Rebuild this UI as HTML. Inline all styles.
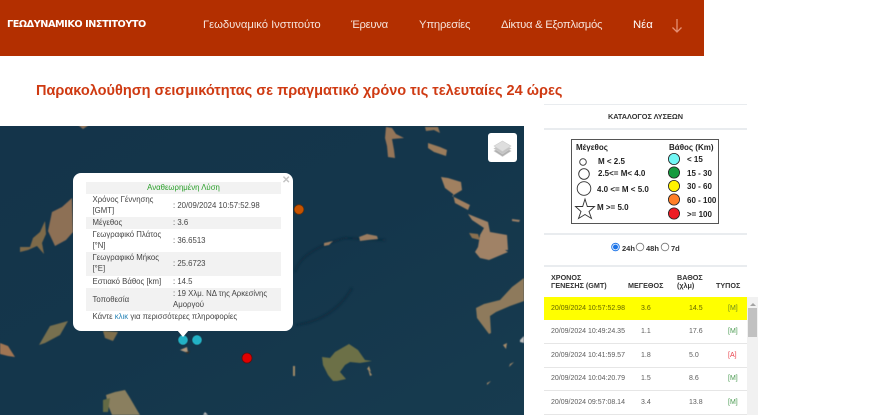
<!DOCTYPE html>
<html><head><meta charset="utf-8">
<style>
html,body{margin:0;padding:0;width:880px;height:415px;overflow:hidden;background:#fff;font-family:"Liberation Sans",sans-serif}
.a{position:absolute;white-space:nowrap}
#nav{position:absolute;left:0;top:0;width:704px;height:56px;background:#b32f00}
.n{position:absolute;top:18px;font:11.3px/14px "Liberation Sans",sans-serif;color:#f6e3da;white-space:nowrap}
#t{left:36px;top:83px;font:bold 14.53px/17px "Liberation Sans",sans-serif;color:#cf3a12}
.hr{position:absolute;left:544px;width:203px;background:#e9ecef}
.lg{position:absolute;font:bold 8px/11px "Liberation Sans",sans-serif;color:#222;white-space:nowrap}
.h{position:absolute;font:bold 7.2px/8px "Liberation Sans",sans-serif;color:#333;white-space:nowrap}
.r{position:absolute;left:544px;width:203px;height:23px;border-bottom:1px solid #e6e6e6}
.r span{position:absolute;top:6px;font:7px/11px "Liberation Sans",sans-serif;color:#5c5c5c;white-space:nowrap}
.p{position:absolute;left:86px;width:195px;font:7.8px/11px "Liberation Sans",sans-serif;color:#444}
.g{background:#f2f2f2}
.p b{font-weight:normal;position:absolute;left:6.5px}
.p i{font-style:normal;position:absolute;left:87px}
</style></head><body>
<div id="nav"></div>
<div class="a" style="left:7px;top:18px;font:bold 9.7px/14px 'DejaVu Sans',sans-serif;color:#fff;letter-spacing:-.45px">ΓΕΩΔΥΝΑΜΙΚΟ ΙΝΣΤΙΤΟΥΤΟ</div>
<div class="n" style="left:203px;letter-spacing:-.05px">Γεωδυναμικό Ινστιτούτο</div>
<div class="n" style="left:351px;letter-spacing:-.3px">Έρευνα</div>
<div class="n" style="left:419px;letter-spacing:-.2px">Υπηρεσίες</div>
<div class="n" style="left:501px;letter-spacing:-.27px">Δίκτυα &amp; Εξοπλισμός</div>
<div class="n" style="left:633px;color:#fff">Νέα</div>
<svg class="a" style="left:670px;top:18px" width="14" height="16" viewBox="0 0 14 16"><path d="M7 1V14M2.5 9.5L7 14L11.5 9.5" fill="none" stroke="#e58f72" stroke-width="1.3"/></svg>
<div id="t" class="a">Παρακολούθηση σεισμικότητας σε πραγματικό χρόνο τις τελευταίες 24 ώρες</div>

<svg class="a" style="left:0;top:126px" width="524" height="289" viewBox="0 126 524 289">
<defs>
<filter id="s"><feGaussianBlur stdDeviation=".5"/></filter>
<filter id="c" x="-10%" y="-50%" width="120%" height="200%"><feGaussianBlur stdDeviation="1"/></filter>
<linearGradient id="bg" x1="0" y1="0" x2="1" y2="1"><stop offset="0" stop-color="#14344a"/><stop offset=".5" stop-color="#14364b"/><stop offset="1" stop-color="#173b4f"/></linearGradient>
</defs>
<rect x="0" y="126" width="524" height="289" fill="url(#bg)"/>
<path d="M296 325C330 320 345 300 352 288M295 272C300 255 320 245 345 238L385 240" fill="none" stroke="#0e2b3e" stroke-width="1.8" filter="url(#c)"/>
<g filter="url(#s)">
<g fill="#8d6f55">
<path d="M48 231L52 212L62 207L72 198L73 232L66 240L55 246Z"/>
<path d="M30 247L33 238L40 232L45 221L46 234L42 243L44 254L37 246L28 250L20 252L20 247Z" fill="#7e6a4a"/>
<path d="M0 343L8 346L15 357L8 356L0 354Z" fill="#a07552"/>
<path d="M39 345L50 326L68 321L60 335L45 343Z" fill="#77704f"/>
<path d="M103 331L118 332L113 341L105 338Z" fill="#80704e"/>
<path d="M180 350L187 347L188 353Z" fill="#b09a80"/>
<path d="M185 352L190 351L188 354Z" fill="#3a3028"/>
<path d="M78 125L89 125L83 129Z" fill="#8a7058"/>
<path d="M386 127L392 128L396 134L404 138L392 139L394 150L395 158L388 157L387 146L385 138Z" fill="#947558"/>
<path d="M428 143L440 147L447 150L446 156L434 152L428 148Z" fill="#9a7c5c"/>
<path d="M425 127L438 127L440 133L434 130L426 131Z" fill="#8f7558"/>
<path d="M441 177L448 178L461 182L462 190L452 196L470 205L468 210L455 203L453 194L445 188Z" fill="#a08060"/>
<path d="M468 214L488 222L490 232L507 235L508 250L505 250L508 252L489 260L480 258L475 252L478 247L480 235L484 228L472 220Z" fill="#a08266"/>
<path d="M469 233L478 234L480 240L472 238Z" fill="#8a7050"/>
<path d="M512 219L520 220L519 222L512 221Z" fill="#9c8066"/>
<path d="M324 243L333 241L329 245L324 246Z" fill="#9a7c60"/>
<path d="M359 237L367 234L377 236L378 239L368 240L360 241Z" fill="#9a7c60"/>
<path d="M476 308L484 304L500 300L512 287L524 278V301L510 306L496 312L490 316L491 333L489 334L480 322L477 318Z" fill="#8e7a5c"/>
<path d="M322 357L330 358L335 352L349 344L358 350L365 360L372 361L360 363L350 362L345 365L340 372L346 379L337 381L333 381L328 375L323 365Z" fill="#6c7047"/>
<path d="M293 366L295 366L295 376H293Z" fill="#a08a68"/>
<path d="M369 366L371 372L367 369Z M368 369L372 375L370 376Z" fill="#a08a68"/>
<path d="M503 345L507 343L506 349Z M510 364L514 362L509 367Z M487 383L491 381L487 385Z" fill="#a58b6a"/>
<path d="M115 392L125 390L130 398L137 410L140 415H112L108 405L106 395Z" fill="#8a7f5e"/>
<path d="M103 400L110 398L108 412H103Z" fill="#636a45"/>
<path d="M205 412L208 415H203Z M520 340L524 336V343L520 342Z" fill="#bbb"/>
</g>
</g>
<circle cx="183" cy="340" r="4.8" fill="#22b2c6" stroke="#1e6e7e" stroke-width=".7"/>
<circle cx="197" cy="340" r="4.8" fill="#22b2c6" stroke="#1e6e7e" stroke-width=".7"/>
<circle cx="247" cy="358" r="5" fill="#e00000" stroke="#5a1010" stroke-width=".8"/>
<circle cx="299" cy="209.500" r="4.800" fill="#c75300" stroke="#6a3208" stroke-width=".8"/>
</svg>

<div class="a" style="left:73px;top:173px;width:220px;height:158px;background:#fff;border-radius:8px"></div>
<div class="a" style="left:177px;top:330px;width:0;height:0;border-left:6px solid transparent;border-right:6px solid transparent;border-top:7px solid #fff"></div>
<div class="a" style="left:282px;top:175px;font:bold 10px/11px 'Liberation Sans',sans-serif;color:#c3c3c3">✕</div>
<div class="p g" style="top:182px;height:12px;text-align:center;color:#2aa02a">Αναθεωρημένη Λύση</div>
<div class="p" style="top:194px;height:23px"><b>Χρόνος Γέννησης<br>[GMT]</b><i style="top:6px">: 20/09/2024 10:57:52.98</i></div>
<div class="p g" style="top:217px;height:12px"><b>Μέγεθος</b><i>: 3.6</i></div>
<div class="p" style="top:229px;height:23px"><b>Γεωγραφικό Πλάτος<br>[°N]</b><i style="top:6px">: 36.6513</i></div>
<div class="p g" style="top:252px;height:24px"><b>Γεωγραφικό Μήκος<br>[°E]</b><i style="top:6px">: 25.6723</i></div>
<div class="p" style="top:276px;height:12px"><b>Εστιακό Βάθος [km]</b><i>: 14.5</i></div>
<div class="p g" style="top:288px;height:23px"><b style="top:6px">Τοποθεσία</b><i>: 19 Χλμ. ΝΔ της Αρκεσίνης<br>Αμοργού</i></div>
<div class="p" style="top:311px;height:12px"><b>Κάντε <span style="color:#2a86b8">κλικ</span> για περισσότερες πληροφορίες</b></div>

<div class="a" style="left:488px;top:133px;width:29px;height:29px;background:#fff;border-radius:3px"></div>
<svg class="a" style="left:492px;top:138px" width="21" height="21" viewBox="0 0 21 21"><g stroke="#ccc" stroke-width=".6"><path d="M2 13L10.500 8L19 13L10.500 18.500Z" fill="#b0b0b0"/><path d="M2 10.500L10.500 5.500L19 10.500L10.500 16Z" fill="#c4c4c4"/><path d="M2 8L10.500 3L19 8L10.500 13.500Z" fill="#dedede"/></g></svg>

<div class="hr" style="top:104px;height:1px"></div>
<div class="a" style="left:544px;width:203px;top:112px;text-align:center;font:bold 7.3px/10px 'Liberation Sans',sans-serif;color:#333">ΚΑΤΑΛΟΓΟΣ ΛΥΣΕΩΝ</div>
<div class="hr" style="top:128px;height:2px"></div>

<div class="a" style="left:571px;top:139px;width:146px;height:83px;border:1px solid #555;box-sizing:content-box"></div>
<div class="lg" style="left:576px;top:142px">Μέγεθος</div>
<div class="lg" style="left:598px;top:155.500px">M &lt; 2.5</div>
<div class="lg" style="left:598px;top:167.500px">2.5&lt;= M&lt; 4.0</div>
<div class="lg" style="left:597px;top:183.500px">4.0 &lt;= M &lt; 5.0</div>
<div class="lg" style="left:597px;top:201.500px">M &gt;= 5.0</div>
<div class="lg" style="left:669px;top:142px">Βάθος (Km)</div>
<div class="lg" style="left:687px;top:153.500px">&lt; 15</div>
<div class="lg" style="left:687px;top:167.500px">15 - 30</div>
<div class="lg" style="left:687px;top:180.500px">30 - 60</div>
<div class="lg" style="left:687px;top:194.500px">60 - 100</div>
<div class="lg" style="left:687px;top:208.500px">&gt;= 100</div>
<svg class="a" style="left:570px;top:140px" width="150" height="85" viewBox="570 140 150 85">
<g fill="#fff" stroke="#333" stroke-width=".9">
<circle cx="583" cy="162" r="3.300"/>
<circle cx="584" cy="174" r="5.300"/>
<circle cx="584" cy="188.500" r="6.800"/>
<path d="M585 199L587.300 206.500L594.500 206.500L589 211.500L591.500 218.500L585 214.500L578.500 218.500L581 211.500L575.500 206.500L582.700 206.500Z"/>
</g>
<g stroke="#222" stroke-width=".8">
<circle cx="674" cy="159" r="5.600" fill="#72f7f5"/>
<circle cx="674" cy="172.500" r="5.600" fill="#159a3e"/>
<circle cx="674" cy="186" r="5.600" fill="#fff200"/>
<circle cx="674" cy="199.500" r="5.600" fill="#ff7f27"/>
<circle cx="674" cy="213.500" r="5.600" fill="#ed1c24"/>
</g>
</svg>
<div class="hr" style="top:233px;height:2px"></div>

<svg class="a" style="left:610px;top:242px" width="80" height="11" viewBox="0 0 80 11">
<circle cx="5.500" cy="5" r="3.800" fill="#fff" stroke="#1a73e8" stroke-width="1"/><circle cx="5.500" cy="5" r="2.500" fill="#1a73e8"/>
<circle cx="30" cy="5" r="3.800" fill="#fff" stroke="#777" stroke-width=".8"/>
<circle cx="55" cy="5" r="3.800" fill="#fff" stroke="#777" stroke-width=".8"/>
</svg>
<div class="lg" style="left:622px;top:243px;font-size:7.5px;color:#333">24h</div>
<div class="lg" style="left:646px;top:243px;font-size:7.5px;color:#333">48h</div>
<div class="lg" style="left:671px;top:243px;font-size:7.5px;color:#333">7d</div>
<div class="hr" style="top:265px;height:2px"></div>

<div class="h" style="left:551px;top:274px">ΧΡΟΝΟΣ<br>ΓΕΝΕΣΗΣ (GMT)</div>
<div class="h" style="left:628px;top:282px">ΜΕΓΕΘΟΣ</div>
<div class="h" style="left:677px;top:274px">ΒΑΘΟΣ<br>(χλμ)</div>
<div class="h" style="left:716px;top:282px">ΤΥΠΟΣ</div>

<div class="r" style="top:297px;background:#ff0;border-bottom:0;height:23px"><span style="left:7px;color:#666600">20/09/2024 10:57:52.98</span><span style="left:97px;color:#666600">3.6</span><span style="left:145px;color:#666600">14.5</span><span style="left:184px;color:#6a8a20">[M]</span></div>
<div class="r" style="top:320px"><span style="left:7px">20/09/2024 10:49:24.35</span><span style="left:97px">1.1</span><span style="left:145px">17.6</span><span style="left:184px;color:#4a9a50">[M]</span></div>
<div class="r" style="top:344px"><span style="left:7px">20/09/2024 10:41:59.57</span><span style="left:97px">1.8</span><span style="left:145px">5.0</span><span style="left:184px;color:#e8404a">[A]</span></div>
<div class="r" style="top:367px"><span style="left:7px">20/09/2024 10:04:20.79</span><span style="left:97px">1.5</span><span style="left:145px">8.6</span><span style="left:184px;color:#4a9a50">[M]</span></div>
<div class="r" style="top:391px"><span style="left:7px">20/09/2024 09:57:08.14</span><span style="left:97px">3.4</span><span style="left:145px">13.8</span><span style="left:184px;color:#4a9a50">[M]</span></div>

<div class="a" style="left:747px;top:297px;width:11px;height:118px;background:#f1f1f1"></div>
<div class="a" style="left:749.500px;top:303px;width:0;height:0;border-left:3px solid transparent;border-right:3px solid transparent;border-bottom:3px solid #a3a3a3"></div>
<div class="a" style="left:748px;top:308px;width:9px;height:29px;background:#c1c1c1"></div>
</body></html>
